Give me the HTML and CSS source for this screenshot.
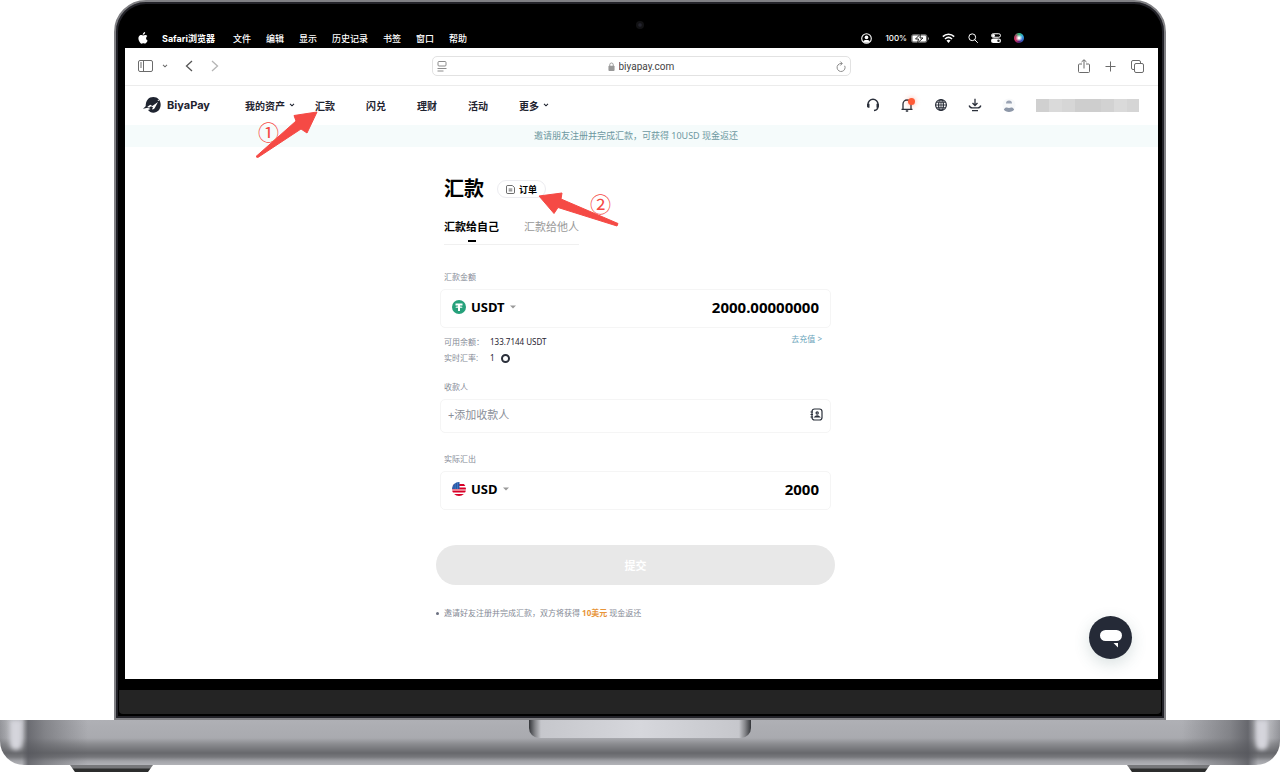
FILE: index.html
```html
<!DOCTYPE html>
<html lang="zh-CN">
<head>
  <meta charset="UTF-8" />
  <meta name="viewport" content="width=device-width, initial-scale=1.0"/>
  <title>BiyaPay 汇款</title>
  <link rel="stylesheet" href="styles.css">
</head>
<body>
  <div class="laptop">
    <div class="lid">
      <div class="camera-row"><span class="camera"></span></div>

      <!-- macOS menu bar -->
      <div class="menubar">
        <div class="menus">
          <svg class="apple" viewBox="0 0 20 24" width="10" height="12"><path fill="#fff" d="M14.2 0c.2 1.500-.4 2.900-1.200 3.900-.9 1-2.200 1.800-3.500 1.700-.2-1.400.5-2.800 1.300-3.700C11.600.9 13.100.1 14.200 0zM18.600 8.200c-1.500 1-2.400 2.300-2.400 4.100 0 2.100 1.200 3.700 3.100 4.500-.6 1.800-1.500 3.400-2.700 4.900-.8 1-1.600 1.700-2.700 1.700-1.200 0-1.700-.7-3.300-.7s-2.100.7-3.300.7c-1.100 0-2-.9-2.900-2C1.500 18.500-.6 12.300 2 8.600c1.100-1.700 2.900-2.700 4.700-2.700 1.500 0 2.600.9 3.700.9 1 0 2.500-1 4.400-1 1.500.1 2.900.9 3.800 2.400z"/></svg>
          <button class="app-name">Safari浏览器</button>
          <button>文件</button>
          <button>编辑</button>
          <button>显示</button>
          <button>历史记录</button>
          <button>书签</button>
          <button>窗口</button>
          <button>帮助</button>
        </div>
        <div class="status">
          <svg viewBox="0 0 20 20" width="11" height="11"><circle cx="10" cy="10" r="8.700" fill="none" stroke="#fff" stroke-width="2"/><circle cx="10" cy="8" r="3.300" fill="#fff"/><path d="M4 15.500c1.500-3.500 10.500-3.500 12 0-3 3-9 3-12 0z" fill="#fff"/></svg>
          <span class="battery">100%
            <svg viewBox="0 0 36 18" width="18" height="9"><rect x="1" y="1" width="31" height="16" rx="4" fill="#555" stroke="#999"/><rect x="3" y="3" width="27" height="12" rx="2" fill="#fff"/><path d="M19 0L9 10h6l-2 8L24 8h-6z" fill="#fff" stroke="#222" stroke-width="2"/><path d="M34 6v6q2-1 2-3t-2-3z" fill="#999"/></svg>
          </span>
          <svg viewBox="0 0 24 18" width="13" height="10"><g fill="none" stroke="#fff" stroke-width="2.800"><path d="M1.500 6.500C7.500.8 16.500.8 22.500 6.500"/><path d="M5.500 10.800c4-3.600 9-3.600 13 0"/></g><path d="M12 18l-3.800-4.200c2.200-2 5.400-2 7.600 0z" fill="#fff"/></svg>
          <svg viewBox="0 0 20 20" width="10" height="10"><g fill="none" stroke="#fff" stroke-width="2"><circle cx="8.500" cy="8.500" r="6.800"/><path d="M13.500 13.500L19 19" stroke-linecap="round"/></g></svg>
          <svg viewBox="0 0 20 20" width="10" height="10"><rect x="1" y="1.500" width="18" height="7" rx="3.500" fill="none" stroke="#fff" stroke-width="2"/><circle cx="5" cy="5" r="3" fill="#fff"/><rect x="0" y="11" width="20" height="9" rx="4.500" fill="#fff"/><circle cx="15" cy="15.500" r="2.500" fill="#222"/></svg>
          <span class="siri"></span>
        </div>
      </div>

      <div class="screen">
        <!-- browser toolbar -->
        <div class="toolbar">
          <div class="tools">
            <button aria-label="边栏"><svg viewBox="0 0 15 12" width="15" height="12"><g fill="none" stroke="#6b6b6b"><rect x=".5" y=".5" width="14" height="11" rx="1.500"/><path d="M5.500 .5v11M2 3h2M2 5h2M2 7h2"/></g></svg></button>
            <button class="side-arrow" aria-label="标签页组"><svg viewBox="0 0 7 5" width="6" height="4"><path d="M1 1l2.500 2.500L6 1" fill="none" stroke="#6b6b6b" stroke-width="1.300"/></svg></button>
            <button class="back" aria-label="后退"><svg viewBox="0 0 8 12" width="8" height="12"><path d="M7 1L1.500 6 7 11" fill="none" stroke="#555" stroke-width="1.300"/></svg></button>
            <button class="forward" aria-label="前进"><svg viewBox="0 0 8 12" width="8" height="12"><path d="M1 1l5.500 5L1 11" fill="none" stroke="#b5b5b5" stroke-width="1.300"/></svg></button>
          </div>
          <div class="address">
            <svg viewBox="0 0 10 11" width="10" height="11"><g fill="none" stroke="#8c8c8c"><rect x="1" y=".5" width="8" height="4.500" rx="1"/><path d="M.5 7.500h9M.5 10h6"/></g></svg>
            <label class="url">
              <svg viewBox="0 0 8 10" width="7" height="9"><rect x=".5" y="4" width="7" height="6" rx="1" fill="#999"/><path d="M2 4.500V3a2 2 0 0 1 4 0v1.500" fill="none" stroke="#999" stroke-width="1.100"/></svg>
              <input type="text" value="biyapay.com" aria-label="网址">
            </label>
            <button aria-label="刷新"><svg viewBox="0 0 10 11" width="10" height="11"><g fill="none" stroke="#8c8c8c"><path d="M8.700 4.800A4 4 0 1 1 5 2.500h1"/><path d="M4.300 .5l2 2-2 2"/></g></svg></button>
          </div>
          <div class="tools tools-right">
            <button aria-label="共享"><svg viewBox="0 0 12 14" width="12" height="14"><g fill="none" stroke="#6b6b6b"><path d="M4 5H1.500a1 1 0 0 0-1 1v6.500a1 1 0 0 0 1 1h9a1 1 0 0 0 1-1V6a1 1 0 0 0-1-1H8M6 9.500V1M3.500 3L6 .7 8.500 3"/></g></svg></button>
            <button aria-label="新建标签页"><svg viewBox="0 0 11 11" width="11" height="11"><path d="M5.500 .5v10M.5 5.500h10" stroke="#6b6b6b"/></svg></button>
            <button aria-label="标签页概览"><svg viewBox="0 0 13 13" width="13" height="13"><g fill="none" stroke="#6b6b6b"><rect x="3.500" y="3.500" width="9" height="9" rx="1.500"/><path d="M3.500 9.500H2A1.500 1.500 0 0 1 .5 8V2A1.500 1.500 0 0 1 2 .5h6A1.500 1.500 0 0 1 9.500 2v1.500"/></g></svg></button>
          </div>
        </div>

        <header class="site-header">
          <a href="#" class="logo">
            <svg viewBox="0 0 54 48" width="18" height="16"><path fill="#1f2430" d="M31 0c13 0 22 10 22 23S44 47 31 47c-7 0-12-3-16-8l8-3-9-4-14 3 8-7C8 10 17 0 31 0z"/><path fill="#fff" d="M13 29l9-6 6 4 17-12-10 19c-2 3-5 4-8 3l3-6-6-3-6 4z"/><circle cx="46" cy="10" r="2" fill="#fff"/></svg>
            BiyaPay
          </a>
          <nav>
            <a href="#">我的资产<svg viewBox="0 0 7 5" width="6" height="4"><path d="M1 1l2.500 2.500L6 1" fill="none" stroke="#1f2430" stroke-width="1.400"/></svg></a>
            <a href="#" class="plain marked">汇款
              <span class="step step-one">①</span>
              <svg class="arrow arrow-one" viewBox="0 0 64 50" width="64" height="50"><path fill="#f54a45" stroke="#f54a45" stroke-linejoin="round" d="M62 4L39 7.500l2 5.500L1 48.500l1.500 1.200L46 21l6 4z"/></svg>
            </a>
            <a href="#" class="plain">闪兑</a>
            <a href="#" class="plain">理财</a>
            <a href="#" class="plain">活动</a>
            <a href="#">更多<svg viewBox="0 0 7 5" width="6" height="4"><path d="M1 1l2.500 2.500L6 1" fill="none" stroke="#1f2430" stroke-width="1.400"/></svg></a>
          </nav>
          <div class="user-tools">
            <button aria-label="客服"><svg viewBox="0 0 14 14" width="14" height="14"><g fill="none" stroke="#2b303b" stroke-width="1.400"><path d="M2 9V6.200a5 5 0 0 1 10 0V8.500c0 2-1.500 3.700-4 4"/></g><path d="M1 5.800h2.500v4H2.200Q1 9.500 1 8zM13 5.800h-2.500v4h1.300Q13 9.500 13 8z" fill="#2b303b"/></svg></button>
            <button class="bell" aria-label="通知"><svg viewBox="0 0 14 14" width="14" height="14"><path d="M1.500 11.300h11M3 11V6a4 4 0 0 1 8 0v5M5.800 13h2.400" fill="none" stroke="#2b303b" stroke-width="1.300"/></svg><span class="dot"></span></button>
            <button aria-label="语言"><svg viewBox="0 0 14 14" width="14" height="14"><g fill="none" stroke="#2b303b" stroke-width="1.200"><circle cx="7" cy="7" r="5.400"/><ellipse cx="7" cy="7" rx="2.400" ry="5.400"/><path d="M7 1.500v11M1.500 7h11M2.500 4.300h9M2.500 9.700h9" stroke-width=".9"/></g></svg></button>
            <button aria-label="下载"><svg viewBox="0 0 14 14" width="14" height="14"><path d="M7 .8v6.500M4.500 5L7 7.500 9.500 5M1.200 7.500q.5 2.300 3 2.300h5.600q2.500 0 3-2.300M4 12.700h6" fill="none" stroke="#2b303b" stroke-width="1.300"/></svg></button>
            <button aria-label="账户"><svg viewBox="0 0 14 14" width="14" height="14"><circle cx="7" cy="7" r="6.600" fill="#f8f9fa"/><path d="M4 5.500a3 3 0 0 1 6 0z" fill="#9aa3b3"/><path d="M1.800 11.500C3 9 5 9 7 10c2-1 4-1 5.200 1.500-1.500 3.300-8.900 3.300-10.400 0z" fill="#8d97a8"/></svg></button>
            <span class="account"></span>
          </div>
        </header>

        <div class="banner">邀请朋友注册并完成汇款，可获得 10USD 现金返还</div>

        <main>
          <form class="remit">
            <div class="title-row">
              <h1>汇款</h1>
              <div class="order-wrap">
                <button type="button" class="order"><svg viewBox="0 0 10 10" width="9" height="9"><g fill="none" stroke="#555"><path d="M2 .5h5L9.500 3v5a1.500 1.500 0 0 1-1.500 1.500H2A1.500 1.500 0 0 1 .5 8V2A1.500 1.500 0 0 1 2 .5z"/><path d="M3 4.500h4M3 6.500h4"/></g></svg>订单</button>
                <svg class="arrow arrow-two" viewBox="0 0 82 36" width="82" height="36"><path fill="#f54a45" stroke="#f54a45" stroke-linejoin="round" d="M1 5l23-3-1 6 57 24.500-1 2.500-59-18.500-4 6z"/></svg>
                <span class="step step-two">②</span>
              </div>
            </div>

            <div class="tabs">
              <button type="button" class="tab active">汇款给自己</button>
              <button type="button" class="tab">汇款给他人</button>
            </div>

            <label class="field-label" for="amount">汇款金额</label>
            <div class="field">
              <svg viewBox="0 0 28 28" width="14" height="14"><circle cx="14" cy="14" r="14" fill="#26a17b"/><path d="M7 7h14v4h-5v2c3 .1 5 .6 5 1.300s-2 1.200-5 1.300V22h-4v-6.400c-3-.1-5-.6-5-1.300s2-1.200 5-1.300v-2H7z" fill="#fff"/></svg>
              <select aria-label="汇款币种"><option>USDT</option></select>
              <svg viewBox="0 0 6 4" width="6" height="4"><path d="M0 .5h6L3 3.500z" fill="#999"/></svg>
              <input type="text" id="amount" value="2000.00000000">
            </div>
            <div class="info">
              <dl>
                <dt>可用余额：</dt><dd>133.7144 USDT</dd>
                <dt>实时汇率:</dt><dd>1 <span class="ring"></span></dd>
              </dl>
              <a href="#">去充值 &gt;</a>
            </div>

            <label class="field-label payee-label" for="payee">收款人</label>
            <div class="field payee">
              <input type="text" id="payee" placeholder="+添加收款人">
              <button type="button" aria-label="通讯录"><svg viewBox="0 0 13 13" width="13" height="13"><g fill="none" stroke="#2b303b" stroke-width="1.200"><rect x="2" y="1" width="10" height="11" rx="2.500"/><path d="M.5 4h2.500M.5 6.500h2.500M.5 9h2.500"/><circle cx="7.200" cy="5" r="1.100"/><path d="M5 9q2.200-2 4.400 0z"/></g></svg></button>
            </div>

            <label class="field-label out-label" for="out">实际汇出</label>
            <div class="field">
              <svg viewBox="0 0 28 28" width="14" height="14"><defs><clipPath id="round"><circle cx="14" cy="14" r="14"/></clipPath></defs><g clip-path="url(#round)"><path fill="#fff" d="M0 0h28v28H0z"/><path stroke="#d80027" stroke-width="3.600" d="M0 6h28M0 13h28M0 19h28M0 26h28"/><path fill="#2459a9" d="M0 0h15v14H0z"/><path stroke="#9fc0e8" stroke-dasharray="1.500 3" stroke-width="1.500" d="M1 4h14M1 8h14M1 12h14"/></g></svg>
              <select aria-label="到账币种"><option>USD</option></select>
              <svg viewBox="0 0 6 4" width="6" height="4"><path d="M0 .5h6L3 3.500z" fill="#999"/></svg>
              <input type="text" id="out" value="2000">
            </div>

            <button type="submit" class="submit" disabled>提交</button>
            <p class="note">邀请好友注册并完成汇款，双方将获得 <b>10美元</b> 现金返还</p>
          </form>
        </main>

        <button class="chat" aria-label="在线客服"><svg viewBox="0 0 22 18" width="22" height="18"><rect width="22" height="11" rx="5.500" fill="#fff"/><path d="M13.500 13h4.500v4.500z" fill="#fff"/></svg></button>
      </div>
      <div class="hinge"></div>
    </div>

    <div class="base"><div class="notch"></div></div>
    <div class="feet"><span></span><span></span></div>
  </div>
</body>
</html>
```
FILE: styles.css
```css
* {
  box-sizing: border-box;
}
body {
  margin: 0;
  background-color: #fff;
  font-family: "Noto Sans", "Noto Sans CJK SC", sans-serif;
  color: #1f2430;
}
button, input, select {
  font-family: inherit;
  border: none;
  background: none;
  padding: 0;
  margin: 0;
  color: inherit;
  outline: none;
}
a {
  color: inherit;
  text-decoration: none;
}
svg {
  display: block;
  flex: none;
}

/* laptop */
.lid {
  margin: 0 114px;
  padding: 2px 3px 4px;
  border: 2px solid #808084;
  border-radius: 32px 32px 0 0;
  background-color: #000;
  box-shadow: inset 0 0 0 2px #232329;
}
.camera-row {
  display: flex;
  justify-content: center;
  align-items: flex-end;
  height: 25px;
}
.camera {
  width: 8px;
  height: 8px;
  border-radius: 50%;
  background: radial-gradient(#24242e 20%, #121214 40%);
}
.hinge {
  height: 24px;
  margin-top: 11px;
  border-radius: 0 0 4px 4px;
  background-color: #242424;
}
.base {
  position: relative;
  overflow: hidden;
  height: 45px;
  border-radius: 0 0 24px 24px;
  background:
    linear-gradient(90deg, rgba(90,91,96,0.3) 0, transparent 8px, transparent 22px, rgba(85,86,92,0.75) 28px, rgba(90,91,96,0.5) 45px, transparent 88px, transparent calc(100% - 98px), rgba(90,91,96,0.5) calc(100% - 50px), rgba(85,86,92,0.8) calc(100% - 32px), transparent calc(100% - 22px), transparent calc(100% - 8px), rgba(90,91,96,0.3) 100%),
    linear-gradient(#afb0b5 0, #a9aaaf 18px, #8b8c90 24px, #67686c 33px, #77787c 37px, #a2a3a8 41px, #b2b3b8 45px);
}
.base::before, .base::after {
  content: "";
  position: absolute;
  top: 0;
  left: 10px;
  width: 12px;
  height: 30px;
  border-radius: 0 0 6px 6px;
  background-color: #d5d5dc;
  filter: blur(2px);
}
.base::after {
  left: auto;
  right: 12px;
}
.notch {
  width: 222px;
  height: 18px;
  margin: 0 auto;
  border-radius: 0 0 10px 10px;
  background: linear-gradient(90deg, #333539, #85868a 6px, #c6c7cc 12px, #d6d7dc 50%, #c6c7cc calc(100% - 12px), #85868a calc(100% - 6px), #333539);
}
.feet {
  display: flex;
  justify-content: space-between;
  padding: 0 70px;
}
.feet span {
  width: 83px;
  height: 7px;
  background: linear-gradient(#77787b 3px, #2c2d2d 4px);
  clip-path: polygon(0 0, 100% 0, 94% 100%, 6% 100%);
}

/* macOS menu bar */
.menubar {
  display: flex;
  justify-content: space-between;
  align-items: center;
  height: 19px;
  padding: 0 137px 1px 19px;
  color: #fff;
  font-size: 9px;
  font-family: Inter, "Noto Sans CJK SC", sans-serif;
}
.menus, .status, .battery {
  display: flex;
  align-items: center;
}
.menus {
  gap: 15px;
}
.menus button {
  font-size: 9px;
  font-weight: 500;
  white-space: nowrap;
}
.apple {
  margin-right: -1px;
}
.menus .app-name {
  margin-right: 3px;
  font-weight: 700;
}
.status {
  gap: 13px;
}
.battery {
  gap: 4px;
  font-size: 8px;
  font-weight: 500;
}
.siri {
  width: 10px;
  height: 10px;
  border-radius: 50%;
  background: radial-gradient(#fff 10%, transparent 50%), conic-gradient(#3b7, #3ad, #36c, #527, #d36, #a46, #3b7);
}

/* browser */
.screen {
  position: relative;
  margin: 0 3px 0 6px;
  background-color: #fff;
}
.toolbar {
  display: grid;
  grid-template-columns: 1fr minmax(0, 419px) 1fr;
  align-items: center;
  height: 38px;
  padding: 0 14px 1px 13px;
  border-bottom: 1px solid #ececec;
}
.tools {
  display: flex;
  align-items: center;
}
.side-arrow {
  margin-left: 9px;
}
.back {
  margin-left: 17px;
}
.forward {
  margin-left: 18px;
}
.tools-right {
  justify-content: flex-end;
  gap: 15px;
}
.address {
  display: flex;
  align-items: center;
  height: 20px;
  padding: 0 4px;
  border: 1px solid #e2e2e2;
  border-radius: 5px;
}
.url {
  display: flex;
  flex: 1;
  justify-content: center;
  align-items: center;
  gap: 4px;
}
.url input {
  width: 56px;
  font: 10px Roboto, sans-serif;
  color: #444;
}

/* site header */
.site-header {
  display: flex;
  align-items: center;
  height: 39px;
  padding: 0 19px 1px 18px;
}
.logo {
  display: flex;
  align-items: center;
  gap: 6px;
  width: 102px;
  font: 700 11px Inter, sans-serif;
}
nav {
  display: flex;
  gap: 20px;
}
nav a {
  display: flex;
  align-items: center;
  gap: 4px;
  font-size: 10px;
  font-weight: 600;
  white-space: nowrap;
}
nav .plain {
  padding-right: 11px;
}
.marked {
  position: relative;
}
.step {
  position: absolute;
  z-index: 2;
  color: #f54a45;
  font: 400 21px/24px "Noto Sans CJK SC", sans-serif;
}
.arrow {
  position: absolute;
  z-index: 1;
}
.step-one {
  left: -57px;
  top: 21px;
}
.arrow-one {
  left: -60px;
  top: 10px;
}
.user-tools {
  display: flex;
  align-items: center;
  gap: 20px;
  margin-left: auto;
}
.bell {
  position: relative;
}
.dot {
  position: absolute;
  top: 0;
  right: -1px;
  width: 7px;
  height: 7px;
  border-radius: 50%;
  background-color: #ff5a36;
  box-shadow: 0 0 5px rgba(255,90,54,0.5);
}
.account {
  width: 103px;
  height: 13px;
  background: linear-gradient(90deg, #d0d0d0 13px, #dadada 13px 26px, #d6d6d6 26px 39px, #cecece 39px 65px, #d2d2d2 65px 78px, #dadada 78px 91px, #d5d5d5 91px);
}
.banner {
  padding: 0 11px 0 0;
  background-color: #f5fbfb;
  color: #6d98a1;
  font-size: 9px;
  line-height: 22px;
  text-align: center;
}

/* remittance form */
main {
  padding: 28px 12px 60px 0;
}
.remit {
  width: 100%;
  max-width: 399px;
  margin: 0 auto;
}
.title-row {
  display: flex;
  align-items: center;
  gap: 13px;
  padding-left: 8px;
}
h1 {
  margin: 0;
  color: #000;
  font-size: 20px;
  line-height: 28px;
}
.order-wrap {
  position: relative;
}
.order {
  display: flex;
  align-items: center;
  gap: 4px;
  height: 18px;
  padding: 0 8px;
  border: 1px solid #ececf0;
  border-radius: 9px;
  color: #000;
  font-size: 9px;
  font-weight: 600;
}
.arrow-two {
  left: 41px;
  top: 11px;
}
.step-two {
  left: 93px;
  top: 11px;
}
.tabs {
  display: flex;
  gap: 25px;
  width: fit-content;
  margin: 15px 0 26px 8px;
  border-bottom: 1px solid #f0f0f0;
}
.tab {
  position: relative;
  padding-bottom: 8px;
  color: #999;
  font-size: 11px;
  line-height: 18px;
}
.tab.active {
  color: #000;
  font-weight: 600;
}
.tab.active::after {
  content: "";
  position: absolute;
  left: 50%;
  bottom: 2px;
  width: 8px;
  height: 2px;
  margin-left: -4px;
  background-color: #000;
}
.field-label {
  display: block;
  padding-left: 8px;
  color: #858a96;
  font-size: 8px;
  line-height: 12px;
}
.payee-label {
  margin-top: 15px;
}
.out-label {
  margin-top: 20px;
}
.field {
  display: flex;
  align-items: center;
  gap: 5px;
  height: 39px;
  margin: 6px 4px 0;
  padding: 0 11px 3px;
  border: 1px solid #f5f5f5;
  border-radius: 5px;
}
.field select {
  appearance: none;
  color: #000;
  font-size: 13px;
  font-weight: 700;
}
.field input {
  flex: 1;
  min-width: 0;
  color: #000;
  font-size: 15px;
  font-weight: 700;
  text-align: right;
}
.payee {
  height: 34px;
  padding: 0 7px 3px;
}
.payee input {
  font-size: 11px;
  font-weight: 400;
  text-align: left;
}
.payee input::placeholder {
  color: #8a8f99;
}
.info {
  display: flex;
  justify-content: space-between;
  align-items: flex-start;
  margin-top: 5px;
  padding: 0 13px 0 8px;
  font-size: 8px;
}
.info dl {
  display: grid;
  grid-template-columns: auto auto;
  column-gap: 6px;
  margin: 0;
  padding-top: 1px;
  line-height: 16px;
}
.info dt {
  color: #858a96;
}
.info dd {
  display: flex;
  align-items: center;
  gap: 6px;
  margin: 0;
}
.info a {
  color: #6ba5bb;
  line-height: 12px;
}
.ring {
  width: 9px;
  height: 9px;
  border: 2px solid #2b303b;
  border-radius: 50%;
}
.submit {
  display: block;
  width: 100%;
  height: 40px;
  margin-top: 35px;
  border-radius: 20px;
  background-color: #e8e8e8;
  color: #fff;
  font-size: 11px;
  font-weight: 600;
}
.note {
  display: flex;
  align-items: center;
  margin: 22px 0 0;
  color: #858a96;
  font-size: 8px;
  line-height: 12px;
  white-space: pre;
}
.note::before {
  content: "";
  width: 3px;
  height: 3px;
  margin-right: 5px;
  border-radius: 50%;
  background-color: #6b7080;
}
.note b {
  color: #e8953a;
}
.chat {
  position: absolute;
  right: 26px;
  bottom: 20px;
  display: flex;
  justify-content: center;
  align-items: center;
  width: 43px;
  height: 43px;
  padding-top: 3px;
  border-radius: 50%;
  background-color: #252a37;
  box-shadow: 0 5px 16px rgba(60,100,100,0.2);
}
```
